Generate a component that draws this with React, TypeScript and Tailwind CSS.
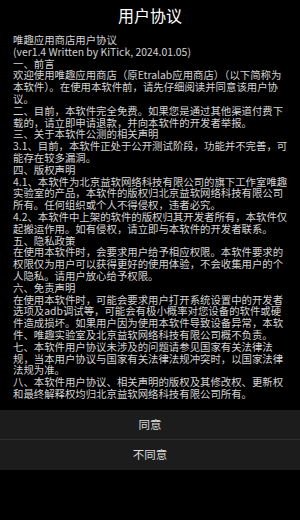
import React from "react";

const paragraphs: string[][] = [
  ["唯趣应用商店用户协议"],
  ["(ver1.4 Written by KiTick, 2024.01.05)"],
  ["一、前言"],
  ["欢迎使用唯趣应用商店（原Etralab应用商店）（以下简称为", "本软件）。在使用本软件前，请先仔细阅读并同意该用户协", "议。"],
  ["二、目前，本软件完全免费。如果您是通过其他渠道付费下", "载的，请立即申请退款，并向本软件的开发者举报。"],
  ["三、关于本软件公测的相关声明"],
  ["3.1、目前，本软件正处于公开测试阶段，功能并不完善，可", "能存在较多漏洞。"],
  ["四、版权声明"],
  ["4.1、本软件为北京益软网络科技有限公司的旗下工作室唯趣", "实验室的产品，本软件的版权归北京益软网络科技有限公司", "所有。任何组织或个人不得侵权，违者必究。"],
  ["4.2、本软件中上架的软件的版权归其开发者所有，本软件仅", "起搬运作用。如有侵权，请立即与本软件的开发者联系。"],
  ["五、隐私政策"],
  ["在使用本软件时，会要求用户给予相应权限。本软件要求的", "权限仅为用户可以获得更好的使用体验，不会收集用户的个", "人隐私。请用户放心给予权限。"],
  ["六、免责声明"],
  ["在使用本软件时，可能会要求用户打开系统设置中的开发者", "选项及adb调试等，可能会有极小概率对您设备的软件或硬", "件造成损坏。如果用户因为使用本软件导致设备异常，本软", "件、唯趣实验室及北京益软网络科技有限公司概不负责。"],
  ["七、本软件用户协议未涉及的问题请参见国家有关法律法", "规，当本用户协议与国家有关法律法规冲突时，以国家法律", "法规为准。"],
  ["八、本软件用户协议、相关声明的版权及其修改权、更新权", "和最终解释权均归北京益软网络科技有限公司所有。"],
];

export default function App() {
  return (
    <div
      className="w-[300px] h-[520px] bg-black flex flex-col overflow-hidden"
      style={{ fontFamily: '"Noto Sans CJK SC", "Noto Sans", sans-serif' }}
    >
      <div className="h-[30px] flex items-center justify-center text-white text-[16px]">
        用户协议
      </div>
      <div className="h-[380px] px-[13px] pt-[4px] text-[10.4px] leading-[11.8px] text-[#d4d4d4] whitespace-nowrap">
        {paragraphs.map((p, i) => (
          <p key={i}>
            {p.map((line, j) => (
              <React.Fragment key={j}>
                {line}
                {j < p.length - 1 && <br />}
              </React.Fragment>
            ))}
          </p>
        ))}
      </div>
      <button className="h-[29px] bg-[#1c1c1c] text-[#dddddd] text-[11.5px] flex items-center justify-center">
        同意
      </button>
      <div className="h-px bg-[#2e2e2e]" />
      <button className="h-[30px] bg-[#1c1c1c] text-[#dddddd] text-[11.5px] flex items-center justify-center">
        不同意
      </button>
    </div>
  );
}
